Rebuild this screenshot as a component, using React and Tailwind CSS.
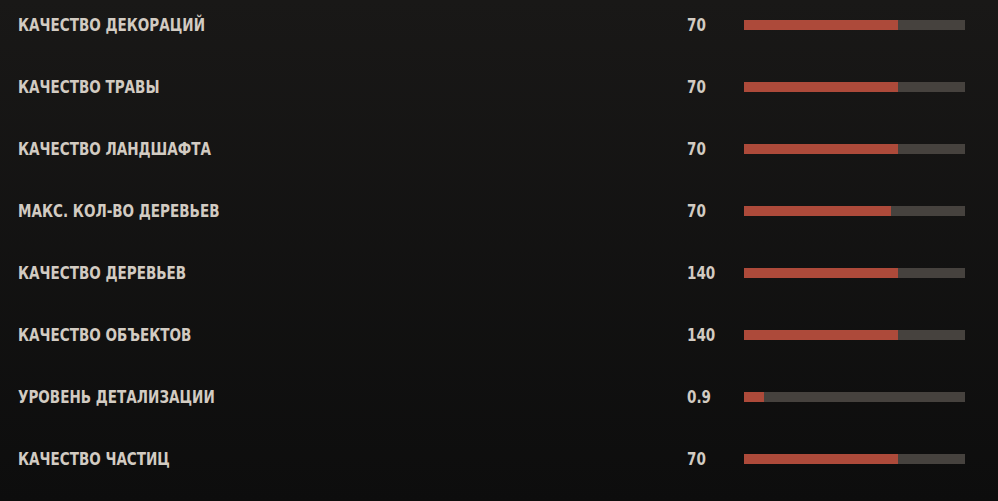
import React from 'react';

const settings = [
  { label: 'Качество декораций', value: '70', fill: 154 },
  { label: 'Качество травы', value: '70', fill: 154 },
  { label: 'Качество ландшафта', value: '70', fill: 154 },
  { label: 'Макс. кол-во деревьев', value: '70', fill: 147 },
  { label: 'Качество деревьев', value: '140', fill: 154 },
  { label: 'Качество объектов', value: '140', fill: 154 },
  { label: 'Уровень детализации', value: '0.9', fill: 20 },
  { label: 'Качество частиц', value: '70', fill: 154 },
];

function SettingRow({ label, value, fill }) {
  return (
    <div className="flex h-[50px] items-center">
      <div className="w-[687px] pl-[18px]">
        <span className="inline-block origin-left scale-x-[0.86] whitespace-nowrap text-[17.5px] font-bold uppercase text-[#d2cbc2]">
          {label}
        </span>
      </div>
      <div className="w-[57px]">
        <span className="inline-block origin-left scale-x-[0.86] text-[17.5px] font-bold text-[#d2cbc2]">{value}</span>
      </div>
      {/* slider track */}
      <div className="h-[10px] w-[221px] bg-[#46423e]">
        <div className="h-full bg-[#ad4a3a]" style={{ width: fill }} />
      </div>
    </div>
  );
}

export default function App() {
  return (
    <div
      className="flex h-[501px] w-[998px] flex-col gap-[12px] overflow-hidden bg-gradient-to-b from-[#191817] to-[#0d0d0d]"
      style={{ fontFamily: '"DejaVu Sans Condensed", "DejaVu Sans", sans-serif' }}
    >
      {settings.map((s) => (
        <SettingRow key={s.label} {...s} />
      ))}
    </div>
  );
}
